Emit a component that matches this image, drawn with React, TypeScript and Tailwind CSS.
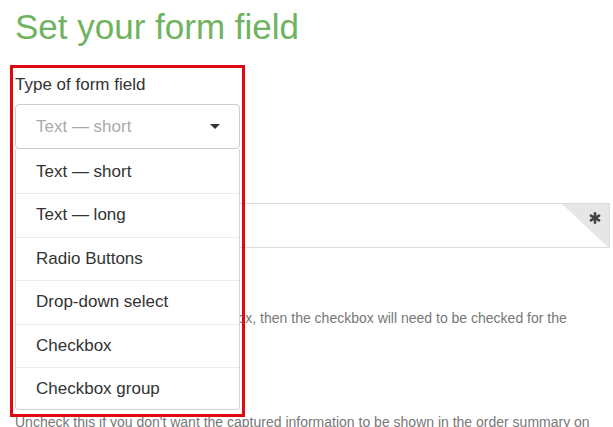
import React from "react";

const items = ["Text — short", "Text — long", "Radio Buttons", "Drop-down select", "Checkbox", "Checkbox group"];

export default function App() {
  return (
    <div className="relative w-[613px] h-[427px] overflow-hidden bg-white font-['Liberation_Sans',Arial,sans-serif]">
      <div className="pl-[15px] pr-[3px]">
        <h1 className="pt-[7px] text-[35px] leading-[40px] font-normal text-[#6fb35f]">Set your form field</h1>

        <div className="relative mt-[28px] w-[225px]">
          <div className="text-[17px] leading-[20px] text-[#333]">Type of form field</div>
          <div className="mt-[9px] h-[45px] border border-[#ccc] rounded-[4px] flex items-center justify-between pl-[20px] pr-[19px]">
            <span className="text-[17px] leading-[20px] text-[#aaa]">Text — short</span>
            <svg width="10" height="5" viewBox="0 0 10 5" className="block">
              <path d="M0 0 L10 0 L5 5 Z" fill="#333" />
            </svg>
          </div>
          <ul className="absolute z-10 left-0 top-[74px] w-[225px] pt-[1.5px] bg-white border-x border-b border-[#d4d4d4] rounded-b-[4px]">
            {items.map((t, i) => (
              <li
                key={t}
                className={
                  "flex items-center pl-[20px] text-[17px] leading-[20px] text-[#333] " +
                  (i === items.length - 1 ? "h-[41px]" : "h-[43.5px] border-b border-[#ececec]")
                }
              >
                {t}
              </li>
            ))}
          </ul>
          <div className="absolute z-20 pointer-events-none left-[-5px] right-[-5px] top-[-10px] bottom-[-268px] border-[3px] border-[#e30613]" />
        </div>

        <div className="mt-[22px] h-[20px]" />
        <div className="relative mt-[12px] h-[45px] border border-[#dcdcdc]">
          <div className="absolute top-0 right-0 w-0 h-0 border-t-[44px] border-l-[47px] border-t-[#e6e6e6] border-l-transparent" />
          <svg width="12" height="12" viewBox="0 0 12 12" className="absolute top-[8px] right-[8px]">
            <g stroke="#444" strokeWidth="2.6" strokeLinecap="round">
              <line x1="6" y1="1.3" x2="6" y2="10.7" />
              <line x1="1.9" y1="3.6" x2="10.1" y2="8.4" />
              <line x1="1.9" y1="8.4" x2="10.1" y2="3.6" />
            </g>
          </svg>
        </div>

        <div className="mt-[20px] h-[20px]" />
        <p className="mt-[20px] text-[14px] leading-[20px] text-[#777]">
          If you make this a “required” checkbox, then the checkbox will need to be checked for the
        </p>
        <div className="h-[20px]" />

        <div className="mt-[22px] h-[20px]" />
        <p className="mt-[22px] text-[14px] leading-[20px] text-[#777]">
          Uncheck this if you don't want the captured information to be shown in the order summary on the checkout page.
        </p>
      </div>
    </div>
  );
}
